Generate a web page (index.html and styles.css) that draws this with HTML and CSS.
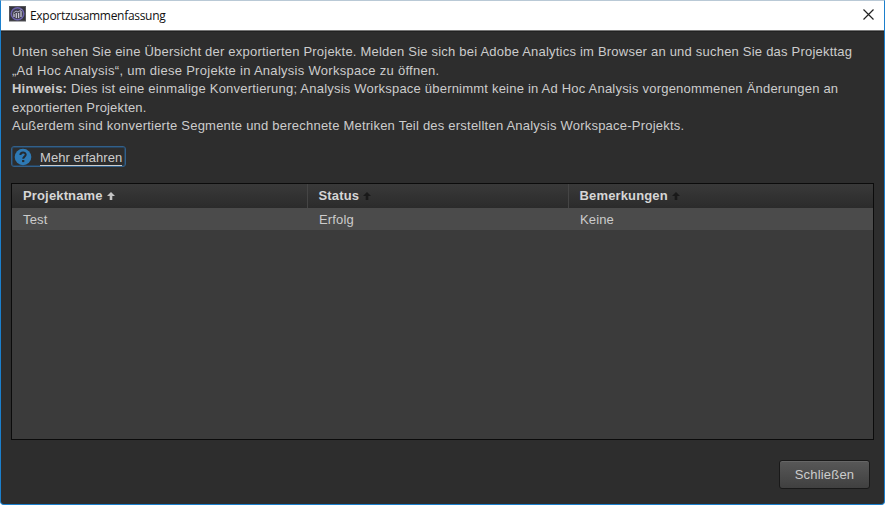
FILE: index.html
```html
<!DOCTYPE html>
<html lang="de">
<head>
<meta charset="utf-8">
<title>Exportzusammenfassung</title>
<link rel="stylesheet" href="styles.css">
</head>
<body>
<div class="window">
  <header class="titlebar">
    <svg class="app-icon" width="17" height="17" viewBox="0 0 17 17">
      <rect x=".5" y=".5" width="16" height="14.5" fill="#34343a" stroke="#55555a"/>
      <ellipse cx="8.5" cy="7.7" rx="6.3" ry="6" fill="#41404d" stroke="#6c62ad" stroke-width="1.5"/>
      <path d="M5 11V8M7.3 12V7M9.6 12V7M12 11V5" stroke="#c5c4d2" stroke-width="1.3"/>
      <path d="M4 7.5L7 5l2 1 3.5-2.5" fill="none" stroke="#aaa8c0"/>
    </svg>
    <h1 class="title">Exportzusammenfassung</h1>
    <svg class="close" width="11" height="11" viewBox="0 0 11 11"><path d="M.5.5l10 10M10.5.5l-10 10" stroke="#222" stroke-width="1.2"/></svg>
  </header>
  <main class="content">
    <p class="intro">
      <span class="line l1">Unten sehen Sie eine Übersicht der exportierten Projekte. Melden Sie sich bei Adobe Analytics im Browser an und suchen Sie das Projekttag</span>
      <span class="line l2">„Ad Hoc Analysis“, um diese Projekte in Analysis Workspace zu öffnen.</span>
      <span class="line l3"><b>Hinweis:</b> Dies ist eine einmalige Konvertierung; Analysis Workspace übernimmt keine in Ad Hoc Analysis vorgenommenen Änderungen an</span>
      <span class="line l4">exportierten Projekten.</span>
      <span class="line l5">Außerdem sind konvertierte Segmente und berechnete Metriken Teil des erstellten Analysis Workspace-Projekts.</span>
    </p>
    <a class="learn">
      <svg width="18" height="18" viewBox="0 0 18 18"><circle cx="9" cy="9" r="8.3" fill="#2e7ab5"/><path d="M6.4 7C6.4 3.6 11.8 3.7 11.7 6.8C11.6 8.7 9.2 8.6 9.2 10.8" fill="none" stroke="#252b30" stroke-width="2"/><rect x="8.1" y="12" width="2.2" height="2.1" fill="#252b30"/></svg>
      <span>Mehr erfahren</span>
    </a>
    <div class="table">
      <div class="row head">
        <div class="cell">Projektname<svg class="sort" width="8" height="8" viewBox="0 0 8 8"><path d="M4 0L8 4H5.3V8H2.7V4H0Z" fill="#c4c4c4"/></svg></div>
        <div class="cell">Status<svg class="sort" width="8" height="8" viewBox="0 0 8 8"><path d="M4 0L8 4H5.3V8H2.7V4H0Z" fill="#191919"/></svg></div>
        <div class="cell">Bemerkungen<svg class="sort" width="8" height="8" viewBox="0 0 8 8"><path d="M4 0L8 4H5.3V8H2.7V4H0Z" fill="#191919"/></svg></div>
      </div>
      <div class="row data">
        <div class="cell">Test</div><div class="cell">Erfolg</div><div class="cell">Keine</div>
      </div>
    </div>
    <footer class="actions"><button class="button">Schließen</button></footer>
  </main>
</div>
</body>
</html>
```
FILE: styles.css
```css
* { box-sizing: border-box; }
body { margin: 0; width: 885px; height: 505px; overflow: hidden; background: #fff; font: 13px/18.5px "Liberation Sans", Arial, sans-serif; color: #ccc; }
.window { width: 885px; height: 505px; display: flex; flex-direction: column; border: 1px solid #1b7fcc; border-top-color: #b9c9d6; border-radius: 0 0 4px 4px; background: #2d2d2d; overflow: hidden; }
.titlebar { height: 30px; flex: none; display: flex; align-items: center; padding: 0 10px 0 8px; background: #fff; border-bottom: 1px solid #777; }
.app-icon { margin-top: -3px; }
.title { margin: 0 auto 0 4px; font: 12px/16px "Open Sans", "Noto Sans", sans-serif; letter-spacing: -.3px; color: #111; }
.close { margin-top: -2px; }
.content { flex: 1; display: flex; flex-direction: column; padding: 11px 10px 0; border-top: 1px solid #222; }
.intro { margin: 0 0 0 1px; height: 93px; }
.line { display: block; white-space: nowrap; }
.l1 { letter-spacing: .215px; }
.l2 { letter-spacing: .285px; }
.l3 { letter-spacing: .212px; }
.l4 { letter-spacing: .16px; }
.l5 { letter-spacing: .222px; }
.learn { width: 115px; height: 21px; margin: 10px 0 0; display: flex; align-items: center; padding-left: 2px; gap: 8px; border: 1px solid #31608b; border-radius: 3px; box-shadow: inset 0 0 0 1px #29435b; white-space: nowrap; }
.learn span { line-height: 14px; margin-top: 3px; border-bottom: 1px solid #ccc; letter-spacing: .05px; }
.table { height: 257px; margin-top: 16px; border: 1px solid #0b0b0b; background: #3b3b3b; width: 863px; }
.row { display: grid; grid-template-columns: 295px 261px 1fr; }
.head { height: 24px; font-weight: bold; line-height: 23px; background: linear-gradient(#393939, #2b2b2b); color: #d6d6d6; }
.data { height: 22px; line-height: 23px; background: #4b4b4b; }
.cell { padding-left: 11px; letter-spacing: .15px; }
.cell + .cell { border-left: 1px solid transparent; }
.head .cell + .cell { border-left-color: #454545; padding-left: 10.5px; }
.sort { margin-left: 4px; }
.actions { display: flex; justify-content: flex-end; padding: 20px 4px 0 0; }
.button { width: 91px; height: 29px; padding: 0; border: 1px solid #191919; border-radius: 3px; background: linear-gradient(#585858, #404040); color: #ccc; font: 13px "Liberation Sans", Arial, sans-serif; letter-spacing: .2px; box-shadow: inset 0 1px #666; }
```
